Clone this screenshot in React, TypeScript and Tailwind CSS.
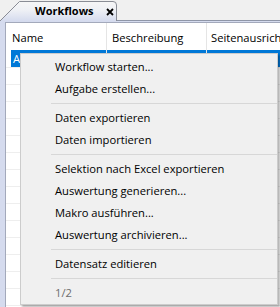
import React from "react";

const font = { fontFamily: '"Open Sans", "Noto Sans", sans-serif' };

type Entry = { label?: string; sep?: boolean; disabled?: boolean };

const entries: Entry[] = [
  { label: "Workflow starten..." },
  { label: "Aufgabe erstellen..." },
  { sep: true },
  { label: "Daten exportieren" },
  { label: "Daten importieren" },
  { sep: true },
  { label: "Selektion nach Excel exportieren" },
  { label: "Auswertung generieren..." },
  { label: "Makro ausführen..." },
  { label: "Auswertung archivieren..." },
  { sep: true },
  { label: "Datensatz editieren" },
  { sep: true },
  { label: "1/2", disabled: true },
];

function Tab() {
  return (
    <div className="relative w-[117px] h-[21px] shrink-0 flex items-center">
      <svg className="absolute inset-0" width="117" height="21" viewBox="0 0 117 21">
        <defs>
          <linearGradient id="tabg" x1="0" y1="0" x2="0" y2="1">
            <stop offset="0" stopColor="#f6f6f6" />
            <stop offset="0.45" stopColor="#eef0f5" />
            <stop offset="1" stopColor="#d5dbee" />
          </linearGradient>
        </defs>
        <path d="M0 21 L19.5 1.5 L113 1.5 Q116.5 1.5 116.5 5 L116.5 21 Z" fill="url(#tabg)" />
        <path d="M0 21 L19.5 1.5 L113 1.5 Q116.5 1.5 116.5 5 L116.5 21" fill="none" stroke="#898c95" strokeWidth="1" />
      </svg>
      <span className="relative ml-[35px] text-[11px] font-bold text-black leading-none" style={font}>
        Workflows
      </span>
      <svg className="relative ml-[12px] mt-[2px]" width="8" height="8" viewBox="0 0 8 8">
        <path d="M1 1 L7 7 M7 1 L1 7" stroke="#000" strokeWidth="1.8" />
      </svg>
    </div>
  );
}

export default function App() {
  const rows = Array.from({ length: 16 });
  return (
    <div className="relative w-[280px] h-[307px] overflow-hidden bg-[#f0f0f0]" style={font}>
      <div className="flex h-[21px]">
        <Tab />
        <div className="flex-1 border-b border-[#8f96a8]" />
      </div>
      <div className="flex h-[286px] bg-[#d5dbee] pl-[5px] pt-[1px]">
        <div className="flex-1 flex flex-col bg-white border-l border-t border-[#a3a9bb] min-w-0 overflow-hidden">
          <div className="flex h-[27px] shrink-0 pl-[5px] text-[11.2px] text-black whitespace-nowrap">
            <div className="w-[96px] shrink-0 border-r border-[#e5e5e5] flex items-center pl-[1px] pt-[3px]">Name</div>
            <div className="w-[100px] shrink-0 border-r border-[#e5e5e5] flex items-center pl-[5px] pt-[3px]">Beschreibung</div>
            <div className="flex-1 flex items-center pl-[4px] pt-[3px]">Seitenausrichtung</div>
          </div>
          <div className="flex h-[17px] shrink-0 pl-[5px] text-[11.2px] text-white">
            <div className="w-[96px] shrink-0 bg-[#0078d7] border-r border-[#e5e5e5] pl-[2px] leading-[17px]">A</div>
            <div className="w-[100px] shrink-0 bg-[#0078d7] border-r border-[#e5e5e5]" />
            <div className="flex-1 bg-[#0078d7]" />
          </div>
          {rows.map((_, i) => (
            <div key={i} className="h-[17px] shrink-0 border-t border-[#eeeeee]" />
          ))}
        </div>
      </div>

      <div className="absolute left-[20px] top-[53px] w-[258px] h-[252px] bg-[#f0f0f0] border border-[#cccccc] pt-[2px] shadow-[2px_2px_2px_rgba(0,0,0,0.3)]">
        {entries.map((e, i) =>
          e.sep ? (
            <div key={i} className="h-[7px] flex items-center pl-[30px]">
              <div className="w-full h-px bg-[#d7d7d7]" />
            </div>
          ) : (
            <div
              key={i}
              className={`h-[22px] flex items-center pl-[34px] text-[11.2px] whitespace-nowrap ${e.disabled ? "text-[#6d6d6d]" : "text-black"}`}
            >
              {e.label}
            </div>
          )
        )}
      </div>
    </div>
  );
}
